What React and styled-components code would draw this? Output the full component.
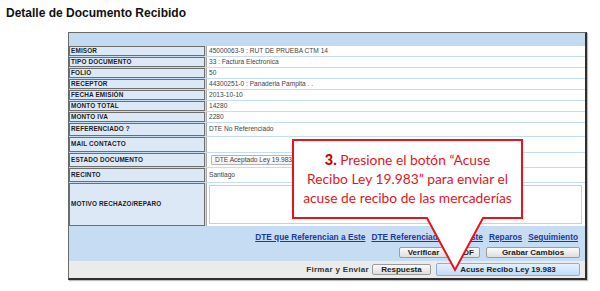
import React from "react";
import styled, { createGlobalStyle } from "styled-components";

const Global = createGlobalStyle`
  html, body { margin: 0; padding: 0; background: #fff; }
  body { font-family: "Liberation Sans", Arial, sans-serif; width: 600px; height: 291px; overflow: hidden; }
`;

const Page = styled.div`
  position: relative;
  width: 600px;
  height: 291px;
  padding: 6px 0 0 6px;
  box-sizing: border-box;
`;

const Title = styled.h1`
  margin: 0;
  font: bold 12px/14px "Liberation Sans", Arial, sans-serif;
  color: #111;
`;

const Panel = styled.div`
  margin: 12px 0 0 62px;
  width: 519px;
  box-sizing: border-box;
  border: 1px solid #6a6a6a;
  border-right: 2px solid #2e2e2e;
  border-bottom: 2px solid #2e2e2e;
  box-shadow: 1px 1px 1px rgba(0, 0, 0, 0.25);
  background: #c5dcf2;
`;

const Header = styled.div`
  height: 13px;
  background: #c3daf1;
`;

const Table = styled.div`
  display: grid;
  grid-template-columns: 136px 1fr;
  grid-template-rows: repeat(7, 10px) 13px 15px 14px 14px 43px;
  column-gap: 1px;
  row-gap: 1px;
  padding-bottom: 1px;
  background: #c5dcf2;
`;

const Label = styled.div`
  box-sizing: border-box;
  background: #dde8f6;
  border: 1px solid #6e6e6e;
  display: flex;
  align-items: center;
  padding-left: 1px;
  font: bold 6.4px/1 "Liberation Sans", Arial, sans-serif;
  color: #1d1d1d;
  letter-spacing: 0.15px;
  white-space: nowrap;
`;

const Value = styled.div`
  box-sizing: border-box;
  background: #fff;
  border-left: 1px solid #a8a8a8;
  display: flex;
  align-items: ${(p) => (p.$top ? "stretch" : "center")};
  padding: ${(p) => (p.$top ? "2px 3px 2px 2px" : "0 0 0 2px")};
  font: 6.6px/1 "Liberation Sans", Arial, sans-serif;
  color: #444;
  white-space: nowrap;
`;

const SelectBox = styled.div`
  box-sizing: border-box;
  width: 84px;
  height: 10px;
  margin-left: 2px;
  border: 1px solid #b5b5b5;
  border-radius: 1px;
  background: linear-gradient(#ffffff, #f1f1f1);
  display: flex;
  align-items: center;
  padding-left: 3px;
`;

const TextArea = styled.div`
  flex: 1;
  border: 1px solid #cfcfcf;
  background: #fff;
`;

const FooterBlue = styled.div`
  height: 34px;
  box-sizing: border-box;
  padding: 5px 5px 0 0;
  display: flex;
  flex-direction: column;
  align-items: flex-end;
  gap: 5px;
  background: #c5dcf2;
`;

const Links = styled.div`
  display: flex;
  gap: 6px;
  height: 10px;
  align-items: center;
  padding-right: 2px;
`;

const Link = styled.a`
  font: bold 8.3px/10px "Liberation Sans", Arial, sans-serif;
  color: #1d3a9e;
  text-decoration: underline;
  white-space: nowrap;
  cursor: pointer;
`;

const ButtonRow = styled.div`
  display: flex;
  align-items: center;
  gap: ${(p) => p.$gap || 4}px;
`;

const Button = styled.button`
  box-sizing: border-box;
  width: ${(p) => p.$w}px;
  height: ${(p) => p.$h || 11}px;
  padding: 0;
  margin: 0;
  border: 1px solid ${(p) => (p.$blue ? "#8aaed6" : "#9c9c9c")};
  border-radius: 2px;
  background: ${(p) =>
    p.$blue
      ? "linear-gradient(#e4f1fd, #c2dcf6)"
      : "linear-gradient(#fbfbfb, #dedede)"};
  font: bold 8px/1 "Liberation Sans", Arial, sans-serif;
  color: #222;
  white-space: nowrap;
`;

const FooterGray = styled.div`
  height: 17px;
  box-sizing: border-box;
  background: #ebebeb;
  display: flex;
  justify-content: flex-end;
  align-items: center;
  padding-right: 5px;
  gap: 3px;
`;

const Caption = styled.span`
  font: bold 8px/1 "Liberation Sans", Arial, sans-serif;
  color: #333;
  letter-spacing: 0.3px;
`;

const Callout = styled.div`
  position: absolute;
  left: 290px;
  top: 138px;
  width: 236px;
  height: 136px;
  pointer-events: none;
`;

const CalloutShape = styled.svg`
  position: absolute;
  left: 0;
  top: 0;
`;

const CalloutText = styled.div`
  position: absolute;
  left: 4px;
  top: 12px;
  width: 227px;
  text-align: center;
  font: 13.8px/19px Lato, "Open Sans", sans-serif;
  color: #e3161d;
  white-space: nowrap;
`;

const Step = styled.b`
  color: #c80000;
  font-weight: 900;
  font-size: 14.5px;
`;

const rows = [
  ["EMISOR", "45000063-9 : RUT DE PRUEBA CTM 14"],
  ["TIPO DOCUMENTO", "33 : Factura Electronica"],
  ["FOLIO", "50"],
  ["RECEPTOR", "44300251-0 : Panaderia Pampita . ."],
  ["FECHA EMISIÓN", "2013-10-10"],
  ["MONTO TOTAL", "14280"],
  ["MONTO IVA", "2280"],
  ["REFERENCIADO ?", "DTE No Referenciado"],
  ["MAIL CONTACTO", ""],
];

export default function App() {
  return (
    <>
      <Global />
      <Page>
        <Title>Detalle de Documento Recibido</Title>
        <Panel>
          <Header />
          <Table>
            {rows.map(([l, v]) => (
              <React.Fragment key={l}>
                <Label>{l}</Label>
                <Value>{v}</Value>
              </React.Fragment>
            ))}
            <Label>ESTADO DOCUMENTO</Label>
            <Value>
              <SelectBox>DTE Aceptado Ley 19.983</SelectBox>
            </Value>
            <Label>RECINTO</Label>
            <Value>Santiago</Value>
            <Label>MOTIVO RECHAZO/REPARO</Label>
            <Value $top>
              <TextArea />
            </Value>
          </Table>
          <FooterBlue>
            <Links>
              <Link>DTE que Referencian a Este</Link>
              <Link>DTE Referenciados por Este</Link>
              <Link>Reparos</Link>
              <Link>Seguimiento</Link>
            </Links>
            <ButtonRow $gap={4}>
              <Button $w={49}>Verificar</Button>
              <Button $w={28}>PDF</Button>
              <Button $w={94} style={{ marginLeft: 2 }}>Grabar Cambios</Button>
            </ButtonRow>
          </FooterBlue>
          <FooterGray>
            <Caption>Firmar y Enviar</Caption>
            <Button $w={59} $h={11}>Respuesta</Button>
            <Button $w={144} $h={13} $blue style={{ marginLeft: 2 }}>
              Acuse Recibo Ley 19.983
            </Button>
          </FooterGray>
        </Panel>
        <Callout>
          <CalloutShape width="236" height="136" viewBox="0 0 236 136">
            <path
              d="M3 2 H232 V80 H193 L165 132 L137 80 H3 Z"
              fill="#fff"
              stroke="#e8141b"
              strokeWidth="2"
              strokeLinejoin="miter"
            />
          </CalloutShape>
          <CalloutText>
            <div>
              <Step>3.</Step> Presione el botón “Acuse
            </div>
            <div>Recibo Ley 19.983” para enviar el</div>
            <div>acuse de recibo de las mercaderías</div>
          </CalloutText>
        </Callout>
      </Page>
    </>
  );
}
